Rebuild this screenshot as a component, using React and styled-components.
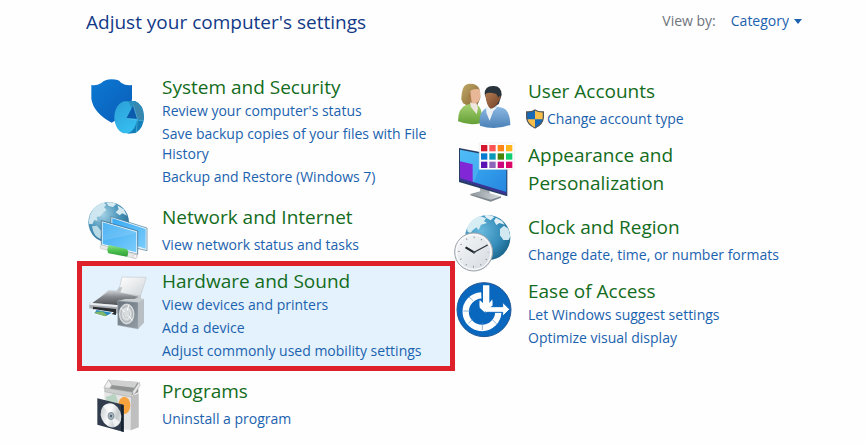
import React from "react";
import styled, { createGlobalStyle } from "styled-components";

const GlobalStyle = createGlobalStyle`
  *, *::before, *::after { box-sizing: border-box; }
  body {
    margin: 0;
    background: #fefefe;
    color: #1b62ae;
    font-family: "Open Sans", "Noto Sans", sans-serif;
    font-size: 14px;
    line-height: 20px;
  }
`;

const Page = styled.main`
  padding: 8px 64px 0 77px;
`;

const Header = styled.header`
  display: flex;
  align-items: flex-start;
  justify-content: space-between;
  padding-left: 9px;
`;

const Title = styled.h1`
  margin: 0;
  color: #123a87;
  font-size: 19px;
  font-weight: 400;
  line-height: 28px;
`;

const ViewBy = styled.label`
  display: flex;
  align-items: center;
  gap: 15px;
  padding-top: 3px;
  color: #6e747c;
`;

const Picker = styled.span`
  display: flex;
  align-items: center;
`;

const ViewSelect = styled.select`
  appearance: none;
  field-sizing: content;
  margin: 0 -13px 0 0;
  padding: 0 18px 0 0;
  border: 0;
  background: transparent;
  color: #1b62ae;
  font: inherit;
  cursor: pointer;
`;

const Caret = styled.svg`
  width: 8px;
  height: 5px;
  pointer-events: none;
`;

const Columns = styled.div`
  display: grid;
  grid-template-columns: minmax(0, 378fr) minmax(0, 347fr);
  align-items: start;
  margin-top: 31px;
`;

const Column = styled.div`
  display: flex;
  flex-direction: column;
  padding-top: ${(p) => (p.$lowered ? "4px" : "0")};
`;

const Category = styled.section`
  display: flex;
  align-items: flex-start;
  gap: 13px;
  padding: 6px 10px ${(p) => (p.$compact ? "6px" : "10px")} ${(p) => (p.$inset ? "12px" : "0")};
  background: ${(p) => (p.$highlighted ? "#e4f2fd" : "transparent")};
  box-shadow: ${(p) => (p.$highlighted ? "inset 0 0 0 5px #dd202a" : "none")};
`;

const Icon = styled.svg`
  flex: none;
  width: 60px;
  height: 60px;
  margin: -4px 0;
  overflow: visible;
`;

const Details = styled.div`
  flex: 1;
  min-width: 0;
`;

const Heading = styled.h2`
  margin: 0;
  font-size: 19px;
  font-weight: 400;
  line-height: 28px;
`;

const HeadingLink = styled.a`
  color: #136c20;
  text-decoration: none;
  &:hover { text-decoration: underline; }
`;

const Tasks = styled.ul`
  display: flex;
  flex-direction: column;
  gap: 3px;
  margin: ${(p) => (p.$compact ? "4px" : "0")} 0 0;
  padding: 0;
  list-style: none;
`;

const Task = styled.li`
  display: flex;
  align-items: center;
  gap: 3px;
  margin-left: ${(p) => (p.$shielded ? "-2px" : "0")};
`;

const TaskLink = styled.a`
  color: #1b62ae;
  text-decoration: none;
  &:hover { text-decoration: underline; }
`;

const ShieldBadge = styled.svg`
  flex: none;
  width: 18px;
  height: 20px;
`;

function AdminShield() {
  return (
    <ShieldBadge viewBox="17 98 56 60" aria-hidden="true">
      <path d="M45 100Q56 107 71 106V124Q69 145 45 156Q21 145 19 124V106Q34 107 45 100Z" fill="#f7bf4a" />
      <path d="M45 100V129H19V106Q34 107 45 100Z" fill="#1769b8" />
      <path d="M45 129H70Q67 146 45 156Z" fill="#1769b8" />
      <path d="M45 100Q56 107 71 106V124Q69 145 45 156Q21 145 19 124V106Q34 107 45 100Z" fill="none" stroke="#50565a" strokeWidth="4" />
    </ShieldBadge>
  );
}

function SecurityIcon() {
  return (
    <Icon viewBox="39 -3 180 180" aria-hidden="true">
      <defs>
        <linearGradient id="secShield" x1="0" y1="0" x2="1" y2="1">
          <stop offset="0" stopColor="#0c79d2" /><stop offset="1" stopColor="#0a5cb8" />
        </linearGradient>
        <linearGradient id="secPie" x1="0" y1="0" x2="0.5" y2="1">
          <stop offset="0" stopColor="#2b9fd6" /><stop offset="1" stopColor="#35bdef" />
        </linearGradient>
      </defs>
      <path d="M107 28Q128 28 135 38Q150 48 168 45V88Q164 128 107 158Q52 128 46 86V45Q62 48 77 38Q86 29 107 28Z" fill="url(#secShield)" />
      <path d="M150 93L177 93Q202 103 204 140Q203 174 179 189L155 191Z" fill="#137fb8" />
      <ellipse cx="149" cy="142" rx="34" ry="48" fill="url(#secPie)" />
      <path d="M158 94L177 93Q202 103 204 140L202 152L178 146Z" fill="#2b8fc0" />
      <path d="M151 145L172 106L184 146Z" fill="#0b5cad" />
      <path d="M172 106L179 97Q200 110 203 150L184 146Z" fill="#3a87ae" />
      <path d="M151 145L203 153M172 106L184 146L181 188" fill="none" stroke="#65c6ec" strokeWidth="1.5" />
    </Icon>
  );
}

function NetworkIcon() {
  return (
    <Icon viewBox="39 12 180 180" aria-hidden="true">
      <defs>
        <radialGradient id="netGlobe" cx="0.35" cy="0.3" r="0.8">
          <stop offset="0" stopColor="#a5d1e5" /><stop offset="0.5" stopColor="#4b95ba" /><stop offset="1" stopColor="#22658f" />
        </radialGradient>
        <linearGradient id="netScreen" x1="0" y1="0" x2="1" y2="1">
          <stop offset="0" stopColor="#38a9f2" /><stop offset="1" stopColor="#7accfb" />
        </linearGradient>
        <linearGradient id="netCable" x1="0" y1="0" x2="0" y2="1">
          <stop offset="0" stopColor="#8fe58c" /><stop offset="0.5" stopColor="#4cc04d" /><stop offset="1" stopColor="#2f9c39" />
        </linearGradient>
      </defs>
      <circle cx="98" cy="82" r="61" fill="url(#netGlobe)" />
      <path d="M52 43Q63 26 83 23L91 29L84 37L92 45L81 53L73 64L62 66L65 78L55 75L49 88L39 86Q38 61 52 43Z" fill="#cde6ef" />
      <path d="M91 23Q108 20 121 27L111 36L98 33ZM124 31L143 43L153 62L139 55L131 61L119 52L128 43Z" fill="#d6ebf1" />
      <path d="M48 94L63 92L76 108L74 133Q52 124 48 94Z" fill="#b8dae7" />
      <path d="M105 65L213 99V167L183 160L105 128Z" fill="#e8f4fb" stroke="#497894" strokeWidth="2" />
      <path d="M109 70L209 102V161L109 130Z" fill="url(#netScreen)" />
      <path d="M76 77L185 108V178L76 151Z" fill="#effaff" stroke="#24577a" strokeWidth="2" />
      <path d="M80 82L181 111V172L80 147Z" fill="url(#netScreen)" />
      <path d="M80 82L181 111V115L80 137Z" fill="#fff" opacity="0.12" />
      <path d="M76 150L99 155V166L74 161Q69 155 76 150ZM153 171L181 177Q187 184 180 191L153 185Z" fill="#e6e8e8" stroke="#c3c8c8" strokeWidth="2" />
      <path d="M99 150L153 163Q160 173 153 185L97 175Q90 162 99 150Z" fill="url(#netCable)" />
      <circle cx="177" cy="184" r="6" fill="#faf5f4" stroke="#c8bfbf" strokeWidth="2" />
    </Icon>
  );
}

function HardwareIcon() {
  return (
    <Icon viewBox="57 24 180 180" aria-hidden="true">
      <defs>
        <linearGradient id="hwPaper" x1="0" y1="0" x2="1" y2="1">
          <stop offset="0" stopColor="#fff" /><stop offset="1" stopColor="#cfd4d8" />
        </linearGradient>
        <linearGradient id="hwTop" x1="0" y1="0" x2="0" y2="1">
          <stop offset="0" stopColor="#c9cdd1" /><stop offset="0.35" stopColor="#85898d" /><stop offset="1" stopColor="#3e4144" />
        </linearGradient>
        <linearGradient id="hwSpeaker" x1="0" y1="0" x2="1" y2="1">
          <stop offset="0" stopColor="#68737c" /><stop offset="1" stopColor="#939da5" />
        </linearGradient>
        <radialGradient id="hwCone">
          <stop offset="0" stopColor="#fbfbfb" /><stop offset="0.3" stopColor="#989ea2" /><stop offset="0.5" stopColor="#e9ebec" /><stop offset="0.8" stopColor="#aeb5b9" /><stop offset="1" stopColor="#f5f6f6" />
        </radialGradient>
      </defs>
      <path d="M156 66L229 67L211 124L145 112Z" fill="url(#hwPaper)" stroke="#c4c9cd" strokeWidth="2" />
      <path d="M147 97L157 97L149 118L207 124L205 131L134 117Z" fill="#bfc5ca" />
      <path d="M116 106L145 107L143 113L210 121L215 132L145 164L61 149Z" fill="#c4c8cb" />
      <path d="M118 108L143 111L205 125L149 158L66 145Z" fill="url(#hwTop)" />
      <path d="M58 143L148 151V177L58 160Z" fill="#a9adb1" />
      <path d="M58 143L148 151V157L58 149Z" fill="#eceff1" />
      <path d="M69 155L138 162V180L69 165Z" fill="#292e32" />
      <path d="M70 162L132 172L109 189L68 175Z" fill="#f5fafc" />
      <path d="M80 165L126 173L107 184L73 174Z" fill="#2689c5" />
      <path d="M78 171L97 169L112 181L105 184L73 174Z" fill="#80b665" />
      <path d="M204 141L222 131V203L204 222Z" fill="#b7bec4" />
      <path d="M143 138L204 143L222 131L166 132Z" fill="#c7cdd1" />
      <path d="M143 138L204 142V222L143 211Z" fill="url(#hwSpeaker)" stroke="#b8bec3" strokeWidth="1" />
      <ellipse cx="170" cy="177" rx="22" ry="30" fill="url(#hwCone)" stroke="#e3e5e6" strokeWidth="2" />
      <ellipse cx="170" cy="176" rx="8" ry="12" fill="#d9ddde" />
      <path d="M152 159L164 171M175 182L187 196M176 151L172 166" stroke="#fff" strokeWidth="3" />
    </Icon>
  );
}

function ProgramsIcon() {
  return (
    <Icon viewBox="27 9 180 180" aria-hidden="true">
      <defs>
        <linearGradient id="pgDisc" x1="0" y1="0" x2="1" y2="1">
          <stop offset="0" stopColor="#b9c0c4" /><stop offset="0.45" stopColor="#f9fafb" /><stop offset="0.7" stopColor="#c4cacd" /><stop offset="1" stopColor="#fafafa" />
        </linearGradient>
      </defs>
      <path d="M73 62L153 80L176 70V172L152 181L73 168Z" fill="#e5e5e5" />
      <path d="M153 80L176 70V172L152 181Z" fill="#bfbfc0" />
      <path d="M86 30L174 37L175 67L157 75L75 61Z" fill="#919292" />
      <path d="M86 29L174 35L163 53L94 45Z" fill="#d0d0d0" />
      <path d="M86 29L96 45L81 66L72 52Z" fill="#efefef" stroke="#a6a6a6" strokeWidth="2" />
      <path d="M75 53L157 67L155 82L74 65Z" fill="#cccdcd" stroke="#a4a4a4" strokeWidth="1.5" />
      <path d="M158 65L178 36L180 46L160 78Z" fill="#e8e8e8" stroke="#a2a2a2" strokeWidth="1.5" />
      <path d="M77 82L106 70L115 99L80 93Z" fill="#b8d3c2" />
      <ellipse cx="133" cy="106" rx="18" ry="26" fill="#f7a23d" />
      <path d="M52 85L131 104V186L52 164Z" fill="#303c4b" />
      <path d="M123 104L131 106V186L123 183Z" fill="#162230" />
      <ellipse cx="93" cy="136" rx="30" ry="37" transform="rotate(-22 93 136)" fill="url(#pgDisc)" />
      <path d="M93 136L69 109Q78 101 91 103ZM93 136L118 155Q113 167 103 170Z" fill="#fff" opacity="0.7" />
      <ellipse cx="93" cy="138" rx="9" ry="11" fill="#a6b3bc" stroke="#70808a" strokeWidth="2" />
      <ellipse cx="93" cy="138" rx="3" ry="4" fill="#475c69" />
    </Icon>
  );
}

function UsersIcon() {
  return (
    <Icon viewBox="30 -6 180 180" aria-hidden="true">
      <defs>
        <linearGradient id="usGreen" x1="0" y1="0" x2="0" y2="1">
          <stop offset="0" stopColor="#a6d273" /><stop offset="1" stopColor="#649f35" />
        </linearGradient>
        <linearGradient id="usBlue" x1="0" y1="0" x2="0" y2="1">
          <stop offset="0" stopColor="#8fbbe5" /><stop offset="1" stopColor="#4b81b7" />
        </linearGradient>
        <linearGradient id="usHair" x1="0" y1="0" x2="1" y2="1">
          <stop offset="0" stopColor="#c1a967" /><stop offset="1" stopColor="#80622f" />
        </linearGradient>
        <linearGradient id="usFace" x1="0" y1="0" x2="1" y2="1">
          <stop offset="0" stopColor="#b27b50" /><stop offset="1" stopColor="#6f3f27" />
        </linearGradient>
      </defs>
      <path d="M54 85L49 73Q50 30 69 27Q97 24 104 44L106 68L97 91L79 98Z" fill="url(#usHair)" />
      <path d="M39 139Q39 101 61 91L79 86L97 91Q115 100 108 144Q73 153 39 139Z" fill="url(#usGreen)" />
      <path d="M75 82L94 84L99 99L95 118L78 96Z" fill="#eee6df" />
      <path d="M75 50Q82 39 104 43Q111 68 98 82Q85 90 79 80Q71 68 75 50Z" fill="#e7b797" />
      <path d="M68 67Q72 53 76 49L80 83L70 78Z" fill="#a77f4b" />
      <path d="M105 152Q98 113 124 99L147 93L174 99Q195 107 196 150Q149 167 105 152Z" fill="url(#usBlue)" />
      <path d="M123 94L143 97L157 97L145 108L134 137L124 113Z" fill="#edf2f5" />
      <path d="M119 57Q119 32 145 33Q169 32 170 59L161 87L147 96L129 87Z" fill="#29333b" />
      <path d="M121 58Q126 49 154 57L160 68Q166 56 167 69L160 81Q149 101 137 101Q124 94 121 58Z" fill="url(#usFace)" />
    </Icon>
  );
}

const swatches = [
  ["#d4172c", "#fa5554", "#ff8617", "#ffb51b"],
  ["#087bd1", "#0999b8", "#478406", "#12cf74"],
  ["#5914b3", "#8c65b9", "#cb087c", "#dc0866"],
];

function AppearanceIcon() {
  return (
    <Icon viewBox="30 6 180 180" aria-hidden="true">
      <defs>
        <linearGradient id="apScreen" x1="0" y1="0" x2="1" y2="1">
          <stop offset="0" stopColor="#3eb5f5" /><stop offset="1" stopColor="#2685df" />
        </linearGradient>
        <linearGradient id="apStand" x1="0" y1="0" x2="1" y2="0">
          <stop offset="0" stopColor="#8a9399" /><stop offset="1" stopColor="#d7dcdf" />
        </linearGradient>
      </defs>
      <path d="M104 158L132 164L137 185L108 182Z" fill="#a3abb0" />
      <path d="M76 177L108 168L168 184L137 197Z" fill="url(#apStand)" />
      <path d="M76 177L137 194L168 184V188L137 200L76 181Z" fill="#7d878e" />
      <path d="M42 39L187 67V184L42 141Z" fill="#263c62" />
      <path d="M45 44L184 71V177L45 134Z" fill="url(#apScreen)" />
      <path d="M45 44L119 58L85 147L45 134Z" fill="#80d8ff" opacity="0.25" />
      <path d="M45 79L83 88V142L45 130Z" fill="#8227d6" />
      <path d="M45 129L184 171V179L45 136Z" fill="#393491" />
      <path d="M103 24H208V103H103Z" fill="#fff" stroke="#ececec" strokeWidth="2" />
      {swatches.map((row, y) => row.map((color, x) => (
        <rect key={color} x={108 + x * 25} y={30 + y * 25} width="19" height="19" fill={color} />
      )))}
    </Icon>
  );
}

function ClockIcon() {
  return (
    <Icon viewBox="30 12 180 180" aria-hidden="true">
      <defs>
        <radialGradient id="ckGlobe" cx="0.35" cy="0.35" r="0.75">
          <stop offset="0" stopColor="#69b9de" /><stop offset="0.6" stopColor="#358dba" /><stop offset="1" stopColor="#176087" />
        </radialGradient>
        <linearGradient id="ckFace" x1="0" y1="0" x2="1" y2="1">
          <stop offset="0" stopColor="#f8f9fa" /><stop offset="1" stopColor="#d3d9df" />
        </linearGradient>
      </defs>
      <circle cx="128" cy="98" r="68" fill="url(#ckGlobe)" />
      <path d="M66 70Q77 40 105 33L123 40L117 49L126 54L108 59L101 75L94 67L83 76L77 83L68 81Z" fill="#d7edf4" />
      <path d="M117 31Q134 27 148 36L137 46L124 39ZM153 38L171 48L179 59L163 54L154 60L147 47Z" fill="#e0f0f5" />
      <path d="M165 72L177 62L190 71L196 94L191 105L175 105L165 91Z" fill="#d2e9f1" />
      <circle cx="86" cy="141" r="57" fill="url(#ckFace)" stroke="#9ba2a9" strokeWidth="3" />
      <circle cx="86" cy="141" r="52" fill="none" stroke="#fff" strokeWidth="3" />
      <circle cx="86" cy="141" r="44" fill="none" stroke="#697078" strokeWidth="5" strokeDasharray="2 21.04" strokeDashoffset="1" />
      <path d="M62 127L87 142L128 120" fill="none" stroke="#30373e" strokeWidth="4" />
      <path d="M62 127L87 142" stroke="#20272e" strokeWidth="6" />
      <circle cx="87" cy="142" r="4" fill="#444c53" />
    </Icon>
  );
}

function AccessIcon() {
  return (
    <Icon viewBox="30 9 180 180" aria-hidden="true">
      <circle cx="117" cy="119" r="81" fill="#0967bd" stroke="#1f5797" strokeWidth="3" />
      <path d="M109 76A49 49 0 1 0 160 126" fill="none" stroke="#fff" strokeWidth="19" />
      <path d="M55 123H77M70 160L82 149M112 158V180M142 149L155 162M72 81L84 92" stroke="#568ec5" strokeWidth="2" />
      <path d="M114 46H133V99L142 88V112L122 130L104 113V90L114 99Z" fill="#fff" />
      <path d="M134 110H173V97L194 118L173 139V127H119Z" fill="#fff" stroke="#0967bd" strokeWidth="3" />
      <path d="M104 94L122 113L142 94V106L123 126L104 108Z" fill="#fff" />
    </Icon>
  );
}

const leftCategories = [
  {
    icon: SecurityIcon,
    name: "System and Security",
    tasks: [
      "Review your computer's status",
      "Save backup copies of your files with File History",
      "Backup and Restore (Windows 7)",
    ],
  },
  { icon: NetworkIcon, name: "Network and Internet", tasks: ["View network status and tasks"] },
  {
    icon: HardwareIcon,
    name: "Hardware and Sound",
    highlighted: true,
    tasks: ["View devices and printers", "Add a device", "Adjust commonly used mobility settings"],
  },
  { icon: ProgramsIcon, name: "Programs", tasks: ["Uninstall a program"] },
];

const rightCategories = [
  { icon: UsersIcon, name: "User Accounts", shielded: true, tasks: ["Change account type"] },
  { icon: AppearanceIcon, name: "Appearance and Personalization", tasks: [] },
  { icon: ClockIcon, name: "Clock and Region", tasks: ["Change date, time, or number formats"] },
  { icon: AccessIcon, name: "Ease of Access", tasks: ["Let Windows suggest settings", "Optimize visual display"] },
];

function CategoryRow({ category, inset }) {
  const { icon: Drawing, name, tasks, highlighted, shielded } = category;
  const compact = tasks.length === 1;
  return (
    <Category $compact={compact} $inset={inset} $highlighted={highlighted}>
      <Drawing />
      <Details>
        <Heading><HeadingLink href="#">{name}</HeadingLink></Heading>
        {tasks.length > 0 && (
          <Tasks $compact={compact}>
            {tasks.map((task) => (
              <Task key={task} $shielded={shielded}>
                {shielded && <AdminShield />}
                <TaskLink href="#">{task}</TaskLink>
              </Task>
            ))}
          </Tasks>
        )}
      </Details>
    </Category>
  );
}

export default function App() {
  return (
    <>
      <GlobalStyle />
      <Page>
        <Header>
          <Title>Adjust your computer's settings</Title>
          <ViewBy>
            View by:
            <Picker>
              <ViewSelect defaultValue="Category">
                <option>Category</option>
                <option>Large icons</option>
                <option>Small icons</option>
              </ViewSelect>
              <Caret viewBox="0 0 8 5" aria-hidden="true"><path d="M0 0H8L4 5Z" fill="#1b62ae" /></Caret>
            </Picker>
          </ViewBy>
        </Header>
        <Columns>
          <Column>
            {leftCategories.map((c) => <CategoryRow key={c.name} category={c} inset />)}
          </Column>
          <Column $lowered>
            {rightCategories.map((c) => <CategoryRow key={c.name} category={c} />)}
          </Column>
        </Columns>
      </Page>
    </>
  );
}
